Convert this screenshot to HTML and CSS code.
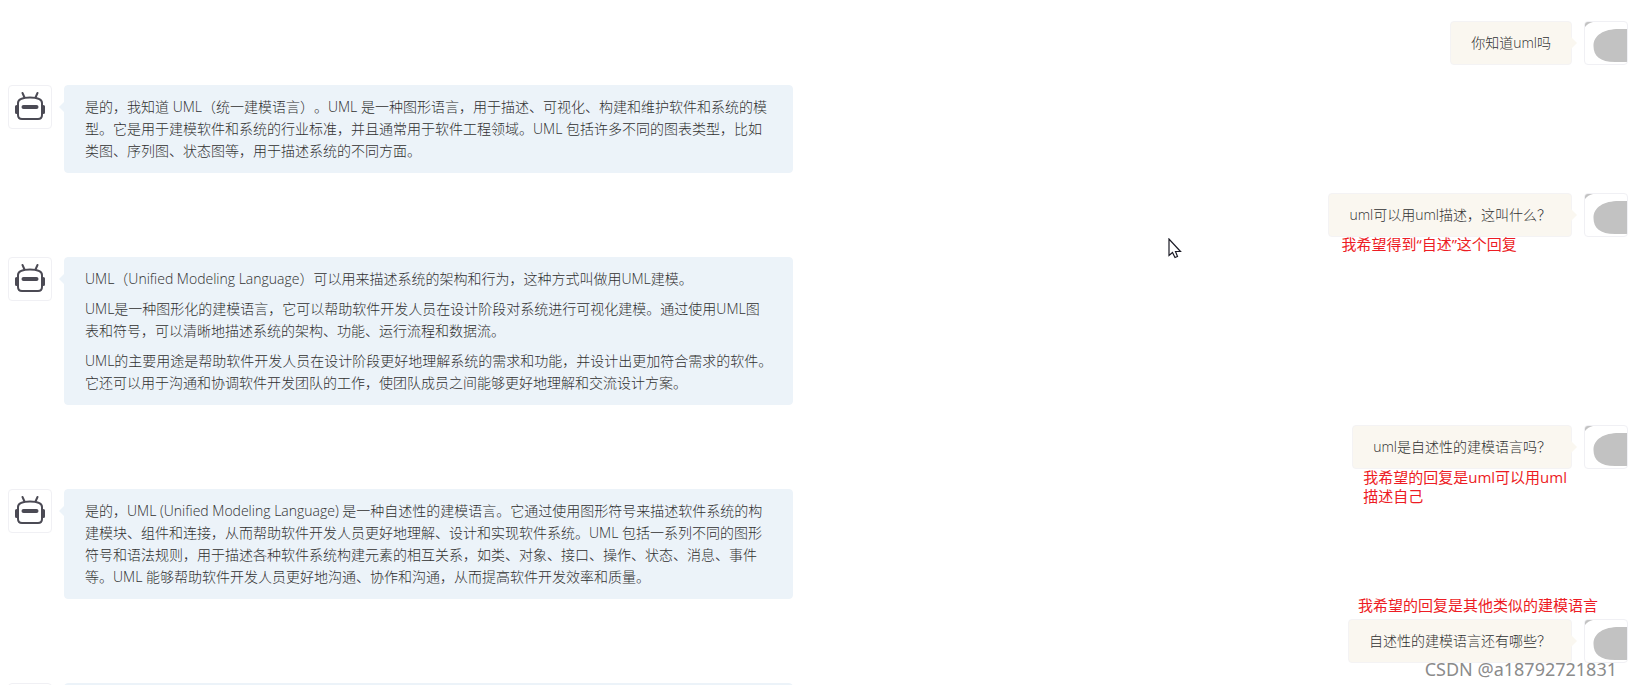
FILE: index.html
```html
<!DOCTYPE html>
<html lang="zh-CN">
<head>
<meta charset="UTF-8">
<meta name="viewport" content="width=device-width, initial-scale=1.0">
<title>UML 对话</title>
<link rel="stylesheet" href="styles.css">
</head>
<body>
<!-- Shared drawings for the avatars -->
<svg class="symbols" aria-hidden="true">
  <symbol id="robot" viewBox="0 0 42 42">
    <g fill="none" stroke="#4b4a54" stroke-width="2" stroke-linecap="round" stroke-linejoin="round">
      <path d="M13.500 7L15.500 11.500M28.500 7L26.500 11.500"/>
      <path d="M9 17C9 13 14 11.500 21 11.500S33 13 33 17V29Q33 33 29 33H13Q9 33 9 29Z"/>
      <path d="M14.500 21H27.500" stroke-width="4"/>
      <path d="M7.500 20.500V26.500M34.500 20.500V26.500" stroke-width="3"/>
    </g>
  </symbol>
  <symbol id="person" viewBox="0 0 42 42">
    <path fill="#c2c2c2" d="M0 0H8Q3 1 0 5ZM42 7H34C19 7 8.500 13 8.500 24C8.500 34 15 40 30 40H42Z"/>
  </symbol>
</svg>

<main class="chat">
  <div class="message user">
    <div class="bubble"><p>你知道uml吗</p></div>
    <svg class="avatar"><use href="#person"/></svg>
  </div>

  <div class="message bot">
    <svg class="avatar"><use href="#robot"/></svg>
    <div class="bubble">
      <p>是的，我知道 UML（统一建模语言）。UML 是一种图形语言，用于描述、可视化、构建和维护软件和系统的模型。它是用于建模软件和系统的行业标准，并且通常用于软件工程领域。UML 包括许多不同的图表类型，比如类图、序列图、状态图等，用于描述系统的不同方面。</p>
    </div>
  </div>

  <div class="message user">
    <div class="bubble">
      <p>uml可以用uml描述，这叫什么？</p>
      <span class="note note-self">我希望得到“自述”这个回复</span>
    </div>
    <svg class="avatar"><use href="#person"/></svg>
  </div>

  <div class="message bot">
    <svg class="avatar"><use href="#robot"/></svg>
    <div class="bubble">
      <p>UML（Unified Modeling Language）可以用来描述系统的架构和行为，这种方式叫做用UML建模。</p>
      <p>UML是一种图形化的建模语言，它可以帮助软件开发人员在设计阶段对系统进行可视化建模。通过使用UML图表和符号，可以清晰地描述系统的架构、功能、运行流程和数据流。</p>
      <p>UML的主要用途是帮助软件开发人员在设计阶段更好地理解系统的需求和功能，并设计出更加符合需求的软件。它还可以用于沟通和协调软件开发团队的工作，使团队成员之间能够更好地理解和交流设计方案。</p>
    </div>
  </div>

  <div class="message user">
    <div class="bubble">
      <p>uml是自述性的建模语言吗？</p>
      <span class="note note-describe">我希望的回复是uml可以用uml<br>描述自己</span>
    </div>
    <svg class="avatar"><use href="#person"/></svg>
  </div>

  <div class="message bot">
    <svg class="avatar"><use href="#robot"/></svg>
    <div class="bubble">
      <p>是的，UML (Unified Modeling Language) 是一种自述性的建模语言。它通过使用图形符号来描述软件系统的构建模块、组件和连接，从而帮助软件开发人员更好地理解、设计和实现软件系统。UML 包括一系列不同的图形符号和语法规则，用于描述各种软件系统构建元素的相互关系，如类、对象、接口、操作、状态、消息、事件等。UML 能够帮助软件开发人员更好地沟通、协作和沟通，从而提高软件开发效率和质量。</p>
    </div>
  </div>

  <div class="message user">
    <div class="bubble">
      <p>自述性的建模语言还有哪些？</p>
      <span class="note note-similar">我希望的回复是其他类似的建模语言</span>
    </div>
    <svg class="avatar"><use href="#person"/></svg>
  </div>

  <div class="message bot">
    <svg class="avatar"><use href="#robot"/></svg>
    <div class="bubble bubble-next"></div>
  </div>
</main>

<svg class="cursor" viewBox="0 0 14 21" aria-hidden="true">
  <path d="M1 1V17.500L4.500 14.500L7 19.500L9.500 18.500L7.500 13.500H12.500Z" fill="#fff" stroke="#1b1b26" stroke-width="1.200"/>
</svg>
<div class="watermark">CSDN @a18792721831</div>
</body>
</html>
```

FILE: styles.css
```css
* { box-sizing: border-box; }
body {
  margin: 0;
  height: 100vh;
  overflow: hidden;
  position: relative;
  background: #fff;
  color: #303030;
  font-family: "Open Sans", "Noto Sans CJK SC", sans-serif;
  font-size: 14px;
  font-weight: 300;
  line-height: 22px;
  text-spacing-trim: space-all; /* keep 。after ） at full width */
}
p { margin: 0; }
p + p { margin-top: 8px; }
.symbols { position: absolute; width: 0; height: 0; }

.chat {
  display: flex;
  flex-direction: column;
  gap: 20px;
  padding: 21px 3px 0 8px;
}
.message { display: flex; align-items: flex-start; gap: 12px; }
.user { justify-content: flex-end; }

.avatar {
  flex: none;
  width: 44px;
  height: 44px;
  border: 1px solid #f0f0f4;
  border-radius: 4px;
}

.bubble {
  position: relative;
  max-width: 45%;
  padding: 10px 19px 10px 20px;
  border: 1px solid #ecf3f9;
  border-radius: 4px;
  background: #ecf3f9;
}
.user .bubble { padding-right: 20px; background: #faf7f0; border-color: #f4f3f4; }
.bubble-next { width: 45%; height: 44px; }

/* Little pointer towards the avatar */
.bubble::before {
  content: "";
  position: absolute;
  top: 15px;
  border: 6px solid transparent;
}
.bot .bubble::before { left: -12px; border-right-color: #ecf3f9; }
.user .bubble::before { right: -12px; border-left-color: #faf7f0; }

/* Red remarks written over the chat */
.note {
  position: absolute;
  color: #ed1c24;
  font-size: 15px;
  font-weight: 400;
  line-height: 19px;
  white-space: nowrap;
}
.note-self { top: 41px; left: 12px; }
.note-describe { top: 42px; left: 10px; }
.note-similar { bottom: 47px; left: 9px; }

.cursor { position: absolute; left: 71.6%; top: 238px; width: 14px; height: 21px; }

.watermark {
  position: absolute;
  right: 14px;
  bottom: 4px;
  color: #8b8b8b;
  font-family: "Noto Sans", sans-serif;
  font-size: 18px;
  font-weight: 400;
  line-height: 24px;
  text-shadow: 1px 1px 0 #fff;
}
```
